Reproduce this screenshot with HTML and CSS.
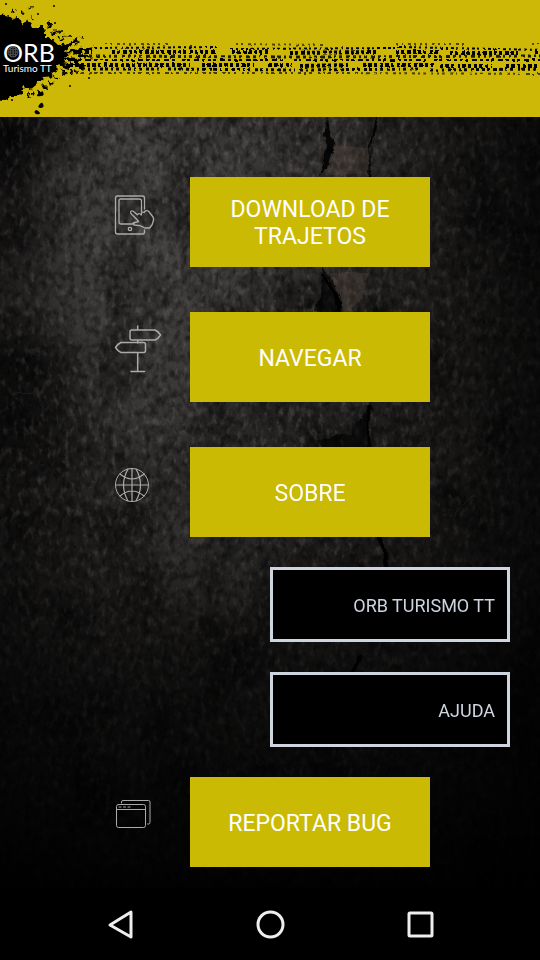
FILE: index.html
```html
<!DOCTYPE html>
<html lang="pt">
<head>
<meta charset="utf-8">
<meta name="viewport" content="width=device-width, initial-scale=1">
<title>ORB Turismo TT</title>
<link rel="stylesheet" href="styles.css">
</head>
<body>
<div class="app">
  <header class="banner">
    <svg class="banner-art" viewBox="0 0 540 117" preserveAspectRatio="xMinYMid slice" aria-hidden="true">
      <defs>
        <filter id="rough" x="-10%" y="-10%" width="120%" height="120%">
          <feTurbulence type="fractalNoise" baseFrequency="0.2" numOctaves="2" seed="7"/>
          <feDisplacementMap in="SourceGraphic" scale="8" xChannelSelector="R" yChannelSelector="G"/>
          <feGaussianBlur stdDeviation="0.3"/>
        </filter>
        <filter id="wear" filterUnits="userSpaceOnUse" x="0" y="30" width="545" height="60">
          <feTurbulence type="fractalNoise" baseFrequency="0.25" numOctaves="1" seed="3"/>
          <feDisplacementMap in="SourceGraphic" scale="3" xChannelSelector="R" yChannelSelector="G"/>
          <feGaussianBlur stdDeviation="0.4"/>
        </filter>
      </defs>
      <path filter="url(#rough)" d="M-8 14L6 15 12 20 18 17 22 23 29 21 32 28 40 28 45 32 45 38 52 38 58 43 61 47 69 47 64 51 70 54 63 58 66 63 57 65 58 70 53 73 52 77 44 78 43 82 37 82 35 88 29 90 24 87 22 92 18 96 11 96 5 101-8 100Z"/>
      <g filter="url(#rough)">
        <path d="M61 46l9-4 3 3-7 4zM66 51l14-3 5 3-12 4zM64 57l16 1-3 3-12 0zM60 63l12 3-2 3-10-3zM69 43l8-5 1 3-5 4zM76 50l17-3-6 5zM78 54l16 3-13 1zM58 39l8-5-2 6zM51 34l4-5 2 2-2 6zM70 62l18 4-9 3zM60 69l8 6-3 1zM68 69l6 4-5 0z"/>
        <path d="M56 34l3-4 1 3zM67 37l4-3v4zM47 28l2-5 2 3zM38 27l6 0 1 5-6 1zM31 17l3 3-3 2zM28 8l4-2-1 4zM13 8l2 5-3-2zM22 10l3 3-3 2zM53 74l6 5-3 1zM48 81l5 2-3 3zM38 88l3 6-3 1zM32 90l3 4-3 1zM28 91l3 6-3-1zM47 23l4-4v6zM81 37l3-1v3zM74 69l5 2-2 3zM43 84l4 4-3 1z"/>
      </g>
      <path d="M39 93q4-3 4-1 2 4-2 4-5 1-4-1zM39 105q3-4 4-1 2 3-2 4-4 0-2-3zM36 110q2 0 4 3 0 2-4 1-3-2 0-4z"/>
      <circle cx="54" cy="6" r="1"/><circle cx="70" cy="86" r="1"/><circle cx="89" cy="78" r="1"/><circle cx="55" cy="23" r="1"/><circle cx="62" cy="31" r="1"/><circle cx="12" cy="100" r="1"/><circle cx="6" cy="4" r="1"/><circle cx="38" cy="14" r="1"/>
      <g class="tread" filter="url(#wear)">
        <path stroke-width="2" stroke-dasharray="2 3 2 5 3 3 2 4" opacity=".6" d="M105 44H170M236 44L325 45M396 44H465M532 44H545"/>
        <path stroke-width="2" stroke-dasharray="3 3 2 3 3 2 2 3" d="M94 48L220 47M230 49L395 48M398 47L545 50"/>
        <path stroke-width="4" stroke-dasharray="3 2 3 3 4 2 3 2" d="M74 52H92M112 52L215 52M232 52H268M290 53L376 52M396 52H440M450 53H518M535 52h9"/>
        <path stroke-width="3" stroke-dasharray="3 3 2 3 3 4 4 3" opacity=".85" d="M78 56L300 57 545 56"/>
        <path stroke-width="2" stroke-dasharray="3 2 3 4 5 3 3 3" d="M74 60L175 60M182 60H285M294 60L374 60M378 60H426M434 60L545 60"/>
        <path stroke-width="4" stroke-dasharray="3 2 4 2 3 3" d="M70 65L190 65M202 65H254M269 65H292M300 66L351 65M363 65H433M440 66H492M506 66H545"/>
        <path stroke-width="3" stroke-dasharray="3 3 2 3 3 4 3 2" d="M82 69L160 69M168 69L295 70M300 70L420 69M430 70L545 69"/>
        <path stroke-width="2" stroke-dasharray="3 3 2 3 3 5" opacity=".65" d="M70 73L335 73 545 74"/>
      </g>
    </svg>
    <div class="brand">
      <span class="brand-name">ORB</span>
      <span class="brand-sub">Turismo TT</span>
      <svg class="brand-globe" viewBox="0 0 14 14" aria-hidden="true"><circle cx="7" cy="7" r="5"/><path d="M2 7h10M7 2v10M3 4q4 2 8 0M3 10q4-2 8 0M5 2q-2 5 0 10M9 2q2 5 0 10"/></svg>
    </div>
  </header>

  <main class="stage">
    <svg class="wall" viewBox="0 0 540 771" preserveAspectRatio="xMidYMin slice" aria-hidden="true">
      <defs>
        <radialGradient id="glow"><stop offset="0" stop-color="#4b4948"/><stop offset=".5" stop-color="#454342" stop-opacity=".75"/><stop offset="1" stop-color="#2a2827" stop-opacity="0"/></radialGradient>
        <radialGradient id="shade"><stop offset="0" stop-color="#000" stop-opacity=".8"/><stop offset="1" stop-color="#000" stop-opacity="0"/></radialGradient>
        <linearGradient id="fall" x2="0" y2="1"><stop offset="0" stop-opacity="0"/><stop offset=".5" stop-opacity=".1"/><stop offset=".72" stop-opacity=".6"/><stop offset="1" stop-opacity=".95"/></linearGradient>
        <linearGradient id="sides"><stop offset="0" stop-opacity=".35"/><stop offset=".2" stop-opacity="0"/><stop offset=".65" stop-opacity="0"/><stop offset="1" stop-opacity=".7"/></linearGradient>
        <filter id="grain" x="0" y="0" width="100%" height="100%">
          <feTurbulence type="fractalNoise" baseFrequency="0.16 0.11" numOctaves="4" seed="11"/>
          <feColorMatrix values="0 0 0 0 0  0 0 0 0 0  0 0 0 0 0  2.4 0 0 0 -0.95"/>
        </filter>
        <filter id="flecks" x="0" y="0" width="100%" height="100%">
          <feTurbulence type="fractalNoise" baseFrequency="0.17 0.1" numOctaves="4" seed="29"/>
          <feColorMatrix values="0 0 0 0 .14  0 0 0 0 .125  0 0 0 0 .115  0 3 0 0 -1.5"/>
        </filter>
        <filter id="blotch" x="0" y="0" width="100%" height="100%">
          <feTurbulence type="fractalNoise" baseFrequency="0.02 0.014" numOctaves="5" seed="5"/>
          <feColorMatrix values="0 0 0 0 0  0 0 0 0 0  0 0 0 0 0  0 3 0 0 -1.35"/>
        </filter>
        <filter id="crag" x="-20%" y="-5%" width="140%" height="110%">
          <feTurbulence type="fractalNoise" baseFrequency="0.06" numOctaves="4" seed="2"/>
          <feDisplacementMap in="SourceGraphic" scale="9" xChannelSelector="R" yChannelSelector="G"/>
          <feGaussianBlur stdDeviation="0.7"/>
        </filter>
      </defs>
      <rect width="540" height="771" fill="#2a2827"/>
      <ellipse cx="145" cy="130" rx="190" ry="320" fill="url(#glow)"/>
      <ellipse cx="300" cy="70" rx="170" ry="170" fill="url(#glow)" opacity=".4"/>
      <ellipse cx="210" cy="440" rx="90" ry="90" fill="url(#glow)" opacity=".7"/>
      <rect width="540" height="771" filter="url(#blotch)" opacity=".45"/>
      <ellipse cx="10" cy="20" rx="60" ry="65" fill="url(#shade)"/>
      <ellipse cx="20" cy="300" rx="95" ry="120" fill="url(#shade)" opacity=".7"/>
      <rect width="540" height="771" filter="url(#flecks)" opacity=".5"/>
      <rect width="540" height="771" filter="url(#grain)" opacity=".45"/>
      <g filter="url(#crag)">
        <path d="M327 0L329 18 338 29 330 36 326 54 318 60 322 45 326 30 323 15Z" fill="#030303" opacity=".85"/>
        <path d="M324 150L336 170 343 200 330 199 314 192 322 180Z" fill="#050505" opacity=".65"/>
        <path d="M322 160q12 8 20 40" fill="none" stroke="#030303" stroke-width="3"/>
        <path d="M369 290L366 340 322 335 316 322 350 318Z" fill="#040404" opacity=".6"/>
        <path d="M370 288L367 345" fill="none" stroke="#020202" stroke-width="3"/>
        <path d="M375 0L370 30 369 60" fill="none" stroke="#070605" stroke-width="2"/>
        <path d="M335 28L328 57 368 57 371 30M330 155L346 200 360 185 370 155Z" fill="#7a604c" opacity=".2"/>
        <path d="M374 415q14 10 12 38M362 540q-5 15-20 28" fill="none" stroke="#020202" stroke-width="4"/>
        <path d="M445 240q5-15 20-20M455 400q10-20 20-20M12 278q14 0 20-5" fill="none" stroke="#66615c" opacity=".35"/>
      </g>
      <rect width="540" height="771" fill="url(#fall)"/>
      <rect width="540" height="771" fill="url(#sides)"/>
    </svg>

    <nav class="menu" aria-label="Menu principal">
      <div class="row">
        <span class="icon"><svg viewBox="0 0 48 48" aria-hidden="true"><path stroke-width="1.3" d="M29.500 18V7q0-2-2-2H2.500q-2 0-2 2v34q0 2 2 2h25q2 0 2-2v-2M26.500 21V10q0-2-2-2H6q-2 0-2 2v21q0 2 2 2h13M19 34l-1-2 5.700-1.500-4-4.300-4-4q-.5-3 2.200-2.200l4.400 3.800q2-2.500 4 .2 0-4 3-2.500.5-2.500 4-1.500l4 5q2 2 1 5l-1.300 4-2.500 3-4.500 0-5-2.300z"/><circle cx="15" cy="38" r="1.700" stroke-width="1.300"/></svg></span>
        <button class="tile" type="button">DOWNLOAD DE TRAJETOS</button>
      </div>
      <div class="row">
        <span class="icon"><svg viewBox="0 0 48 48" aria-hidden="true"><path stroke-width="1.500" d="M22.700 0v4M22.700 14v3M22.700 27v18.500M16 45.500h13.500M17 4h23q3 1 5.500 5-2.500 4-5.500 5H17q-2 0-2-2V6q0-2 2-2zM28.500 16.500H6q-3 1-5.500 5 2.500 4 5.500 5h22.500q2 0 2-2v-6q0-2-2-2z"/></svg></span>
        <button class="tile" type="button">NAVEGAR</button>
      </div>
      <div class="row">
        <span class="icon"><svg viewBox="0 0 48 48" aria-hidden="true"><circle cx="17" cy="24" r="16.500"/><path stroke-width="1.200" d="M.5 24h33M17 7.500v33M13 8q-9 16 0 32M21 8q9 16 0 32M5 13q12 10 24 0M5 35q12-10 24 0"/></svg></span>
        <button class="tile" type="button">SOBRE</button>
      </div>
      <div class="submenu">
        <button class="subtile" type="button">ORB TURISMO TT</button>
        <button class="subtile" type="button">AJUDA</button>
      </div>
      <div class="row">
        <span class="icon"><svg viewBox="0 0 48 48" aria-hidden="true"><path d="M3.500 13.500h25q2 0 2 2v19q0 2-2 2h-25q-2 0-2-2v-19q0-2 2-2zM1.500 18.500h29M4 16h2M8.500 16h2M13 16h2M6.500 12v-1q0-1.500 1.500-1.500h25.500q1.500 0 1.500 1.500v20.500q0 1.500-1.500 1.500h-1"/></svg></span>
        <button class="tile" type="button">REPORTAR BUG</button>
      </div>
    </nav>
  </main>

  <footer class="system-bar">
    <button type="button" aria-label="Voltar"><svg viewBox="0 0 32 32" aria-hidden="true"><path d="M27 4v25L6 17z"/></svg></button>
    <button type="button" aria-label="Início"><svg viewBox="0 0 32 32" aria-hidden="true"><circle cx="16.500" cy="16.500" r="12.500"/></svg></button>
    <button type="button" aria-label="Recentes"><svg viewBox="0 0 32 32" aria-hidden="true"><rect x="5" y="5" width="23" height="23" rx="1"/></svg></button>
  </footer>
</div>
</body>
</html>
```
FILE: styles.css
```css
* {
  box-sizing: border-box;
}

body {
  margin: 0;
  background: #000;
  font-family: Roboto, "Liberation Sans", sans-serif;
}

.app {
  display: flex;
  flex-direction: column;
  min-height: 100vh;
}

.banner {
  position: relative;
  height: 117px;
  padding: 40px 3px;
  background: #cdb807;
}

.banner-art {
  position: absolute;
  inset: 0;
  width: 100%;
  height: 100%;
}

.tread {
  fill: none;
  stroke: #000;
}

.brand {
  position: relative;
  display: flex;
  flex-direction: column;
  width: max-content;
  color: #fff;
  font-family: Lato, "Open Sans", sans-serif;
}

.brand-name {
  font-size: 25px;
  line-height: 24px;
}

.brand-sub {
  font-size: 10px;
  line-height: 8px;
}

.brand-globe {
  position: absolute;
  top: 5px;
  left: 3px;
  width: 14px;
  fill: none;
  stroke: #555;
  stroke-width: 1;
}

.stage {
  position: relative;
  flex: 1;
  padding: 60px 30px 21px;
  overflow: hidden;
}

.wall {
  position: absolute;
  inset: 0;
  width: 100%;
  height: 100%;
}

.menu {
  position: relative;
  display: flex;
  flex-direction: column;
  gap: 45px;
}

.row {
  display: grid;
  grid-template-columns: 75px 240px;
  justify-content: center;
  padding-left: 5px;
}

.icon {
  display: flex;
  align-items: center;
  height: 75px;
}

.icon svg {
  width: 48px;
  height: 48px;
  overflow: visible;
  fill: none;
  stroke: #aaa;
  stroke-linecap: round;
  stroke-linejoin: round;
}

button {
  border: 0;
  font: inherit;
}

.tile {
  height: 90px;
  padding: 2px 24px 0;
  background: #cbba04;
  color: #fff;
  font-size: 23px;
  line-height: 27px;
}

.submenu {
  display: flex;
  flex-direction: column;
  align-items: flex-end;
  gap: 30px;
  margin: -15px 0;
}

.subtile {
  width: 240px;
  height: 75px;
  padding: 2px 12px 0;
  border: 3px solid #ced5df;
  background: #000;
  color: #ced5df;
  font-size: 18px;
  text-align: right;
}

.system-bar {
  display: flex;
  justify-content: center;
  height: 72px;
  background: #000;
}

.system-bar button {
  display: flex;
  align-items: center;
  justify-content: center;
  width: 150px;
  background: none;
}

.system-bar svg {
  width: 32px;
  height: 32px;
  fill: none;
  stroke: #eee;
  stroke-width: 3;
  stroke-linejoin: round;
}
```
